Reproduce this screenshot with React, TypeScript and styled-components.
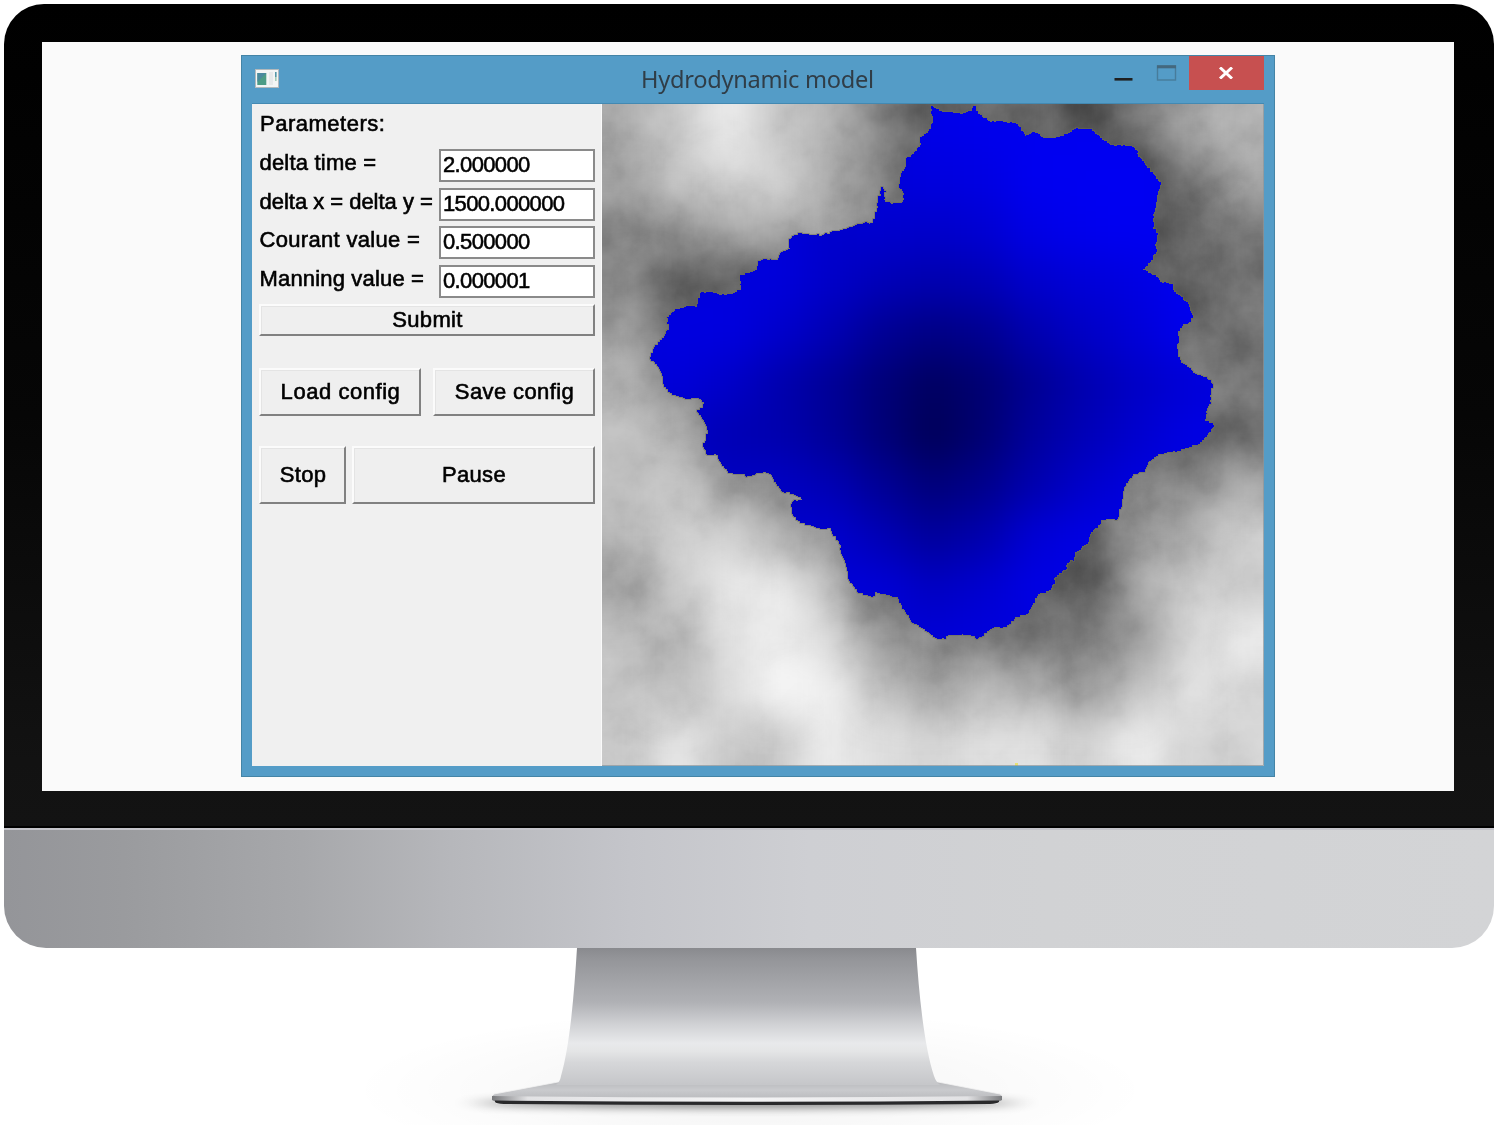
import React from "react";
import styled, { createGlobalStyle } from "styled-components";

const GlobalStyle = createGlobalStyle`
  * { box-sizing: border-box; }
  html, body { margin: 0; padding: 0; background: #ffffff; overflow: hidden; }
`;

const Stage = styled.main`
  width: 1500px;
  height: 1125px;
  padding: 4px 6px 0 4px;
  display: flex;
  flex-direction: column;
  overflow: hidden;
  background: #ffffff;
`;

const Bezel = styled.section`
  height: 824px;
  flex: none;
  padding: 38px 40px 37px 38px;
  border-radius: 40px 40px 0 0;
  border-bottom: 2px solid #000000;
  background: linear-gradient(180deg, #000000 0%, #060606 50%, #121212 92%, #131313 100%);
`;

const Screen = styled.div`
  height: 749px;
  padding: 13px 0 0 199px;
  background: #fafafa;
`;

const Chin = styled.div`
  height: 120px;
  flex: none;
  border-top: 2px solid #c4c4ca;
  border-radius: 0 0 42px 42px;
  background: linear-gradient(
    90deg,
    #949599 0%,
    #9a9b9e 8%,
    #a7a8ab 20%,
    #b6b7bb 30%,
    #c4c5ca 42%,
    #cecfd3 54%,
    #d1d2d4 70%,
    #d3d4d6 100%
  );
`;

const StandArt = styled.svg`
  display: block;
  flex: none;
  width: 1490px;
  height: 177px;
`;

const Window = styled.div`
  width: 1034px;
  height: 722px;
  display: flex;
  flex-direction: column;
  padding: 0 10px 10px;
  border: 1px solid #4484a6;
  background: #549cc7;
`;

const TitleBar = styled.header`
  height: 47px;
  flex: none;
  display: grid;
  grid-template-columns: 389px 1fr 150px;
`;

const AppIcon = styled.svg`
  display: block;
  width: 24px;
  height: 19px;
  margin: 13px 0 0 3px;
`;

const Title = styled.h1`
  margin: 5px 0 0;
  font: 400 23.6px/36px "Noto Sans", "Open Sans", sans-serif;
  letter-spacing: -0.28px;
  white-space: nowrap;
  color: #303d47;
`;

const Controls = styled.div`
  display: flex;
  justify-content: flex-end;
`;

const CaptionGlyphs = styled.svg`
  display: block;
  width: 75px;
  height: 34px;
`;

const CloseButton = styled.button`
  width: 75px;
  height: 34px;
  padding: 0 2px 1px 0;
  border: 0;
  display: flex;
  align-items: center;
  justify-content: center;
  background: #c75050;
`;

const Client = styled.div`
  flex: 1;
  display: flex;
  border-top: 1px solid #4389b2;
`;

const Panel = styled.form`
  width: 350px;
  flex: none;
  padding: 0 6px 0 7px;
  border-right: 1px solid #fafafa;
  background: #f0f0f0;
  font: 22px/24px "Liberation Sans", Arial, sans-serif;
  color: #000000;
`;

const Heading = styled.div`
  height: 45px;
  padding: 8px 0 0 1px;
  letter-spacing: 0.5px;
  -webkit-text-stroke: 0.6px #000000;
`;

const Field = styled.label`
  display: grid;
  grid-template-columns: 180px 156px;
  height: 38.7px;
`;

const Tracked = styled.span<{ $track: number }>`
  letter-spacing: ${(p) => p.$track}px;
  white-space: nowrap;
  -webkit-text-stroke: 0.6px #000000;
`;

const FieldName = styled(Tracked)`
  padding: 2px 0 0 0.5px;
`;

const Value = styled.input`
  width: 156px;
  height: 33px;
  padding: 0 0 1px 2px;
  border: 2px solid #8a8a8a;
  border-radius: 0;
  outline: 0;
  background: #ffffff;
  color: #000000;
  font: 22px/28px "Liberation Sans", Arial, sans-serif;
  letter-spacing: -0.65px;
  -webkit-text-stroke: 0.55px #000000;
`;

const ButtonRow = styled.div<{ $columns: string; $gap: number; $top: number }>`
  display: grid;
  grid-template-columns: ${(p) => p.$columns};
  column-gap: ${(p) => p.$gap}px;
  margin-top: ${(p) => p.$top}px;
`;

const PushButton = styled.button<{ $height: number }>`
  height: ${(p) => p.$height}px;
  padding: 0 0 0 1px;
  border: 2px solid;
  border-color: #fbfbfb #818181 #818181 #fbfbfb;
  border-radius: 0;
  background: #efefef;
  box-shadow: inset 1px 1px 0 #e4e4e4;
  color: #000000;
  font: 22px/24px "Liberation Sans", Arial, sans-serif;
`;

const MapView = styled.svg`
  display: block;
  width: 662px;
  height: 662px;
`;

const MAP = { x: 602, y: 104, size: 662 };
const CELLS = 13;
const CELL = MAP.size / CELLS;

/* Terrain height, sampled on a 13 x 13 grid, as grey levels. */
const terrain = [
  [172, 200, 238, 195, 180, 132, 92, 102, 108, 76, 118, 165, 178],
  [158, 195, 214, 212, 168, 136, 90, 100, 100, 90, 76, 105, 168],
  [140, 150, 162, 172, 160, 132, 110, 100, 100, 90, 84, 104, 118],
  [132, 90, 96, 108, 122, 120, 110, 100, 100, 95, 90, 92, 118],
  [162, 106, 84, 110, 120, 120, 110, 100, 100, 95, 94, 106, 112],
  [182, 134, 106, 110, 120, 120, 110, 100, 100, 100, 105, 128, 124],
  [190, 182, 120, 120, 120, 120, 110, 100, 100, 100, 115, 98, 104],
  [190, 198, 158, 138, 130, 120, 110, 100, 100, 110, 138, 138, 172],
  [184, 208, 210, 175, 152, 125, 110, 100, 95, 88, 152, 168, 208],
  [158, 202, 232, 238, 188, 116, 115, 105, 92, 76, 165, 210, 200],
  [192, 182, 224, 238, 216, 148, 142, 122, 118, 128, 148, 212, 238],
  [194, 184, 218, 250, 240, 190, 160, 182, 184, 152, 190, 228, 214],
  [200, 232, 196, 202, 238, 220, 212, 224, 224, 206, 240, 210, 212],
];

/* Water depth on the same grid, as blue levels. */
const water = [
  [220, 220, 220, 220, 220, 225, 232, 235, 240, 240, 240, 240, 240],
  [220, 220, 220, 220, 220, 218, 222, 226, 240, 242, 242, 240, 240],
  [220, 220, 220, 218, 205, 206, 202, 210, 230, 238, 242, 240, 240],
  [220, 222, 222, 218, 200, 184, 174, 182, 204, 216, 226, 240, 240],
  [222, 224, 222, 204, 180, 148, 132, 144, 176, 198, 216, 236, 238],
  [218, 216, 200, 174, 150, 120, 96, 114, 148, 176, 198, 214, 225],
  [205, 198, 180, 174, 152, 120, 88, 114, 158, 184, 206, 226, 230],
  [205, 200, 194, 194, 180, 150, 122, 140, 176, 204, 222, 226, 230],
  [205, 205, 205, 205, 206, 182, 156, 174, 214, 228, 228, 228, 228],
  [210, 210, 210, 210, 216, 214, 194, 208, 228, 230, 228, 228, 228],
  [215, 215, 215, 215, 215, 215, 214, 220, 222, 222, 222, 222, 222],
  [215, 215, 215, 215, 215, 215, 215, 220, 222, 222, 222, 222, 222],
  [215, 215, 215, 215, 215, 215, 215, 220, 222, 222, 222, 222, 222],
];

const shore: [number, number][] = [
  [933, 106], [931, 109], [933, 123], [929, 131], [920, 139], [920, 147], [914, 154], [906, 160],
  [905, 169], [901, 175], [899, 188], [904, 195], [902, 203], [893, 204], [885, 200], [884, 192],
  [886, 191], [883, 187], [881, 187], [881, 196], [878, 197], [877, 210], [873, 223], [870, 224],
  [867, 222], [855, 226], [847, 229], [836, 231], [824, 235], [811, 235], [802, 233], [794, 236],
  [789, 241], [790, 249], [781, 253], [778, 260], [765, 259], [758, 261], [757, 270], [750, 273],
  [740, 275], [741, 290], [735, 293], [722, 295], [713, 292], [701, 293], [698, 300], [697, 307],
  [690, 306], [680, 309], [672, 313], [667, 318], [669, 330], [664, 338], [655, 347], [650, 359],
  [658, 367], [663, 380], [664, 387], [672, 395], [687, 399], [698, 398], [704, 404], [703, 408],
  [697, 412], [704, 422], [708, 432], [703, 447], [707, 455], [716, 455], [721, 464], [728, 473],
  [742, 474], [746, 477], [763, 472], [771, 475], [777, 486], [782, 492], [788, 492], [802, 500],
  [794, 501], [791, 507], [793, 516], [800, 523], [818, 528], [829, 528], [833, 535], [840, 545],
  [841, 552], [846, 565], [849, 581], [858, 593], [873, 598], [875, 592], [882, 594], [896, 597],
  [902, 607], [912, 623], [923, 629], [937, 639], [944, 639], [948, 635], [968, 635], [976, 639],
  [992, 628], [1006, 627], [1015, 617], [1026, 614], [1032, 605], [1038, 594], [1048, 591],
  [1055, 582], [1054, 578], [1063, 570], [1066, 571], [1067, 563], [1074, 559], [1075, 552],
  [1088, 542], [1091, 532], [1101, 522], [1101, 520], [1117, 519], [1122, 503], [1124, 487],
  [1133, 474], [1143, 472], [1149, 461], [1158, 454], [1177, 451], [1198, 444], [1207, 435],
  [1214, 425], [1205, 419], [1207, 408], [1211, 402], [1211, 390], [1213, 384], [1207, 377],
  [1195, 373], [1180, 359], [1177, 347], [1179, 340], [1178, 331], [1183, 324], [1191, 321],
  [1193, 315], [1188, 302], [1173, 289], [1173, 284], [1162, 282], [1156, 275], [1143, 269],
  [1150, 262], [1157, 250], [1155, 244], [1158, 233], [1153, 227], [1154, 212], [1156, 205],
  [1158, 191], [1161, 182], [1155, 175], [1145, 163], [1137, 153], [1138, 151], [1132, 146],
  [1112, 145], [1102, 138], [1092, 129], [1078, 128], [1068, 134], [1053, 138], [1043, 137],
  [1035, 132], [1026, 136], [1018, 124], [1003, 121], [990, 121], [980, 114], [976, 106],
  [974, 106], [972, 111], [962, 114], [953, 112], [940, 111],
];

/* Walks the shore in short steps along the pixel grid, with a small ragged offset. */
function raggedPath(points: [number, number][]) {
  let seed = 7;
  const random = () => {
    seed = (seed * 16807) % 2147483647;
    return seed / 2147483647 - 0.5;
  };
  let d = `M${points[0][0]} ${points[0][1]}`;
  points.forEach(([x0, y0], i) => {
    const [x1, y1] = points[(i + 1) % points.length];
    const steps = Math.max(1, Math.round(Math.hypot(x1 - x0, y1 - y0) / 2.2));
    for (let s = 1; s <= steps; s++) {
      const t = s / steps;
      const jitter = s < steps ? 1.4 : 0;
      const x = Math.round(x0 + (x1 - x0) * t + random() * jitter);
      const y = Math.round(y0 + (y1 - y0) * t + random() * jitter);
      d += `H${x}V${y}`;
    }
  });
  return d + "Z";
}

const shorePath = raggedPath(shore);

function Samples({ grid, tint }: { grid: number[][]; tint: (v: number) => string }) {
  const cells: React.ReactNode[] = [];
  for (let r = -1; r <= CELLS; r++) {
    for (let c = -1; c <= CELLS; c++) {
      const row = Math.min(CELLS - 1, Math.max(0, r));
      const col = Math.min(CELLS - 1, Math.max(0, c));
      cells.push(
        <rect
          key={`${r}:${c}`}
          x={MAP.x + c * CELL}
          y={MAP.y + r * CELL}
          width={CELL + 0.6}
          height={CELL + 0.6}
          fill={tint(grid[row][col])}
        />
      );
    }
  }
  return <>{cells}</>;
}

function TerrainMap() {
  return (
    <MapView viewBox={`${MAP.x} ${MAP.y} ${MAP.size} ${MAP.size}`}>
      <defs>
        <filter id="smooth" filterUnits="userSpaceOnUse" x="530" y="30" width="810" height="810" colorInterpolationFilters="sRGB">
          <feGaussianBlur stdDeviation="19" />
        </filter>
        <filter id="clouds" filterUnits="userSpaceOnUse" x="602" y="104" width="662" height="662" colorInterpolationFilters="sRGB">
          <feTurbulence type="fractalNoise" baseFrequency="0.024" numOctaves="5" seed="4" />
          <feColorMatrix values="1.5 0 0 0 -0.25  1.5 0 0 0 -0.25  1.5 0 0 0 -0.25  0 0 0 0 1" />
        </filter>
        <clipPath id="lake">
          <path d={shorePath} shapeRendering="crispEdges" />
        </clipPath>
      </defs>
      <g filter="url(#smooth)">
        <Samples grid={terrain} tint={(v) => `rgb(${v},${v},${v})`} />
      </g>
      <rect x="602" y="104" width="662" height="662" filter="url(#clouds)" opacity="0.24" style={{ mixBlendMode: "soft-light" }} />
      <path d={shorePath} fill="none" stroke="#6c6c55" strokeWidth="1.4" opacity="0.6" />
      <g clipPath="url(#lake)">
        <g filter="url(#smooth)">
          <Samples grid={water} tint={(v) => `rgb(0,0,${v})`} />
        </g>
      </g>
      <rect x="1015" y="763" width="3" height="3" fill="#e8e070" />
      <path d="M1263.5 104V765.5H602" fill="none" stroke="#8a969c" strokeWidth="1" opacity="0.7" />
    </MapView>
  );
}

function Stand() {
  return (
    <StandArt viewBox="4 948 1490 177">
      <defs>
        <linearGradient id="neck" x1="0" y1="948" x2="0" y2="1084" gradientUnits="userSpaceOnUse">
          <stop offset="0" stopColor="#898a8e" />
          <stop offset="0.08" stopColor="#949599" />
          <stop offset="0.4" stopColor="#b0b1b5" />
          <stop offset="0.56" stopColor="#d0d1d4" />
          <stop offset="0.7" stopColor="#e8e9eb" />
          <stop offset="0.76" stopColor="#e4e5e6" />
          <stop offset="0.84" stopColor="#d6d7d9" />
          <stop offset="1" stopColor="#c6c7ca" />
        </linearGradient>
        <linearGradient id="foot" x1="0" y1="1082" x2="0" y2="1098" gradientUnits="userSpaceOnUse">
          <stop offset="0" stopColor="#b9babd" />
          <stop offset="0.5" stopColor="#c9cacd" />
          <stop offset="1" stopColor="#bcbdc0" />
        </linearGradient>
        <linearGradient id="lip" x1="492" x2="1003" y1="0" y2="0" gradientUnits="userSpaceOnUse">
          <stop offset="0" stopColor="#77787b" />
          <stop offset="0.07" stopColor="#e2e2e4" />
          <stop offset="0.5" stopColor="#f4f4f5" />
          <stop offset="0.93" stopColor="#e2e2e4" />
          <stop offset="1" stopColor="#77787b" />
        </linearGradient>
        <radialGradient id="haze">
          <stop offset="0" stopColor="#000" stopOpacity="0.05" />
          <stop offset="0.6" stopColor="#000" stopOpacity="0.02" />
          <stop offset="1" stopColor="#000" stopOpacity="0" />
        </radialGradient>
        <filter id="soft" x="-20%" y="-200%" width="140%" height="500%">
          <feGaussianBlur stdDeviation="14 4" />
        </filter>
      </defs>
      <ellipse cx="750" cy="1090" rx="400" ry="82" fill="url(#haze)" />
      <ellipse cx="747" cy="1103" rx="272" ry="5" fill="#000" opacity="0.45" filter="url(#soft)" />
      <path d="M558 1082L494 1094Q492 1095 492 1098L496 1103H998L1002 1098Q1003 1095 1000 1094L938 1082Z" fill="url(#foot)" stroke="#f2f2f2" strokeWidth="0.8" />
      <path d="M577 948C574 995 570 1045 561 1076Q560 1082 556 1085H940Q936 1082 934 1076C924 1045 919 995 916 948Z" fill="url(#neck)" />
      <path d="M492 1096Q747 1099 1002 1096V1100L998 1102Q747 1104 496 1102L492 1100Z" fill="url(#lip)" />
      <path d="M495 1100.5Q747 1103 999 1100.5V1102Q997 1103.5 990 1104Q747 1106 504 1104Q496 1103.5 495 1102Z" fill="#29292b" />
    </StandArt>
  );
}

const fields = [
  { name: "delta time =", value: "2.000000", track: 0.2 },
  { name: "delta x = delta y =", value: "1500.000000", track: -0.02 },
  { name: "Courant value =", value: "0.500000", track: 0.32 },
  { name: "Manning value =", value: "0.000001", track: 0.17 },
];

export default function App() {
  return (
    <>
      <GlobalStyle />
      <Stage>
        <Bezel>
          <Screen>
            <Window>
              <TitleBar>
                <AppIcon viewBox="0 0 24 19">
                  <rect x="0.5" y="0.5" width="23" height="18" fill="#f3f5f5" stroke="#b2b9bc" />
                  <rect x="2.3" y="4" width="9" height="12" fill="#4c9c86" />
                  <path d="M2.3 4H11.3L2.3 13Z" fill="#4a83a5" opacity="0.75" />
                  <rect x="14" y="3" width="4" height="13" fill="#e6e9ea" />
                  <rect x="20" y="3" width="1.6" height="5" fill="#5597a8" />
                  <rect x="20" y="8" width="1.6" height="4" fill="#a3cdb8" />
                </AppIcon>
                <Title>Hydrodynamic model</Title>
                <Controls>
                  <CaptionGlyphs viewBox="0 0 75 34">
                    <rect x="0.5" y="22" width="18" height="2.6" fill="#1f1f1f" />
                    <rect x="43.5" y="10" width="18" height="14" fill="none" stroke="#477c9b" strokeWidth="1.4" />
                    <rect x="43" y="9.3" width="19" height="3" fill="#44687e" />
                  </CaptionGlyphs>
                  <CloseButton type="button" aria-label="Close">
                    <svg width="16" height="12" viewBox="0 0 16 12">
                      <path d="M2 0.5L14 11.5M14 0.5L2 11.5" stroke="#fff" strokeWidth="3" />
                    </svg>
                  </CloseButton>
                </Controls>
              </TitleBar>
              <Client>
                <Panel>
                  <Heading>Parameters:</Heading>
                  {fields.map((f) => (
                    <Field key={f.name}>
                      <FieldName $track={f.track}>{f.name}</FieldName>
                      <Value defaultValue={f.value} spellCheck={false} />
                    </Field>
                  ))}
                  <ButtonRow $columns="336px" $gap={0} $top={0}>
                    <PushButton type="button" $height={32}><Tracked $track={0.3}>Submit</Tracked></PushButton>
                  </ButtonRow>
                  <ButtonRow $columns="162px 162px" $gap={12} $top={32}>
                    <PushButton type="button" $height={48}><Tracked $track={0.55}>Load config</Tracked></PushButton>
                    <PushButton type="button" $height={48}><Tracked $track={0.4}>Save config</Tracked></PushButton>
                  </ButtonRow>
                  <ButtonRow $columns="87px 243px" $gap={6} $top={30}>
                    <PushButton type="button" $height={58}><Tracked $track={0.3}>Stop</Tracked></PushButton>
                    <PushButton type="button" $height={58}><Tracked $track={0.3}>Pause</Tracked></PushButton>
                  </ButtonRow>
                </Panel>
                <TerrainMap />
              </Client>
            </Window>
          </Screen>
        </Bezel>
        <Chin />
        <Stand />
      </Stage>
    </>
  );
}
